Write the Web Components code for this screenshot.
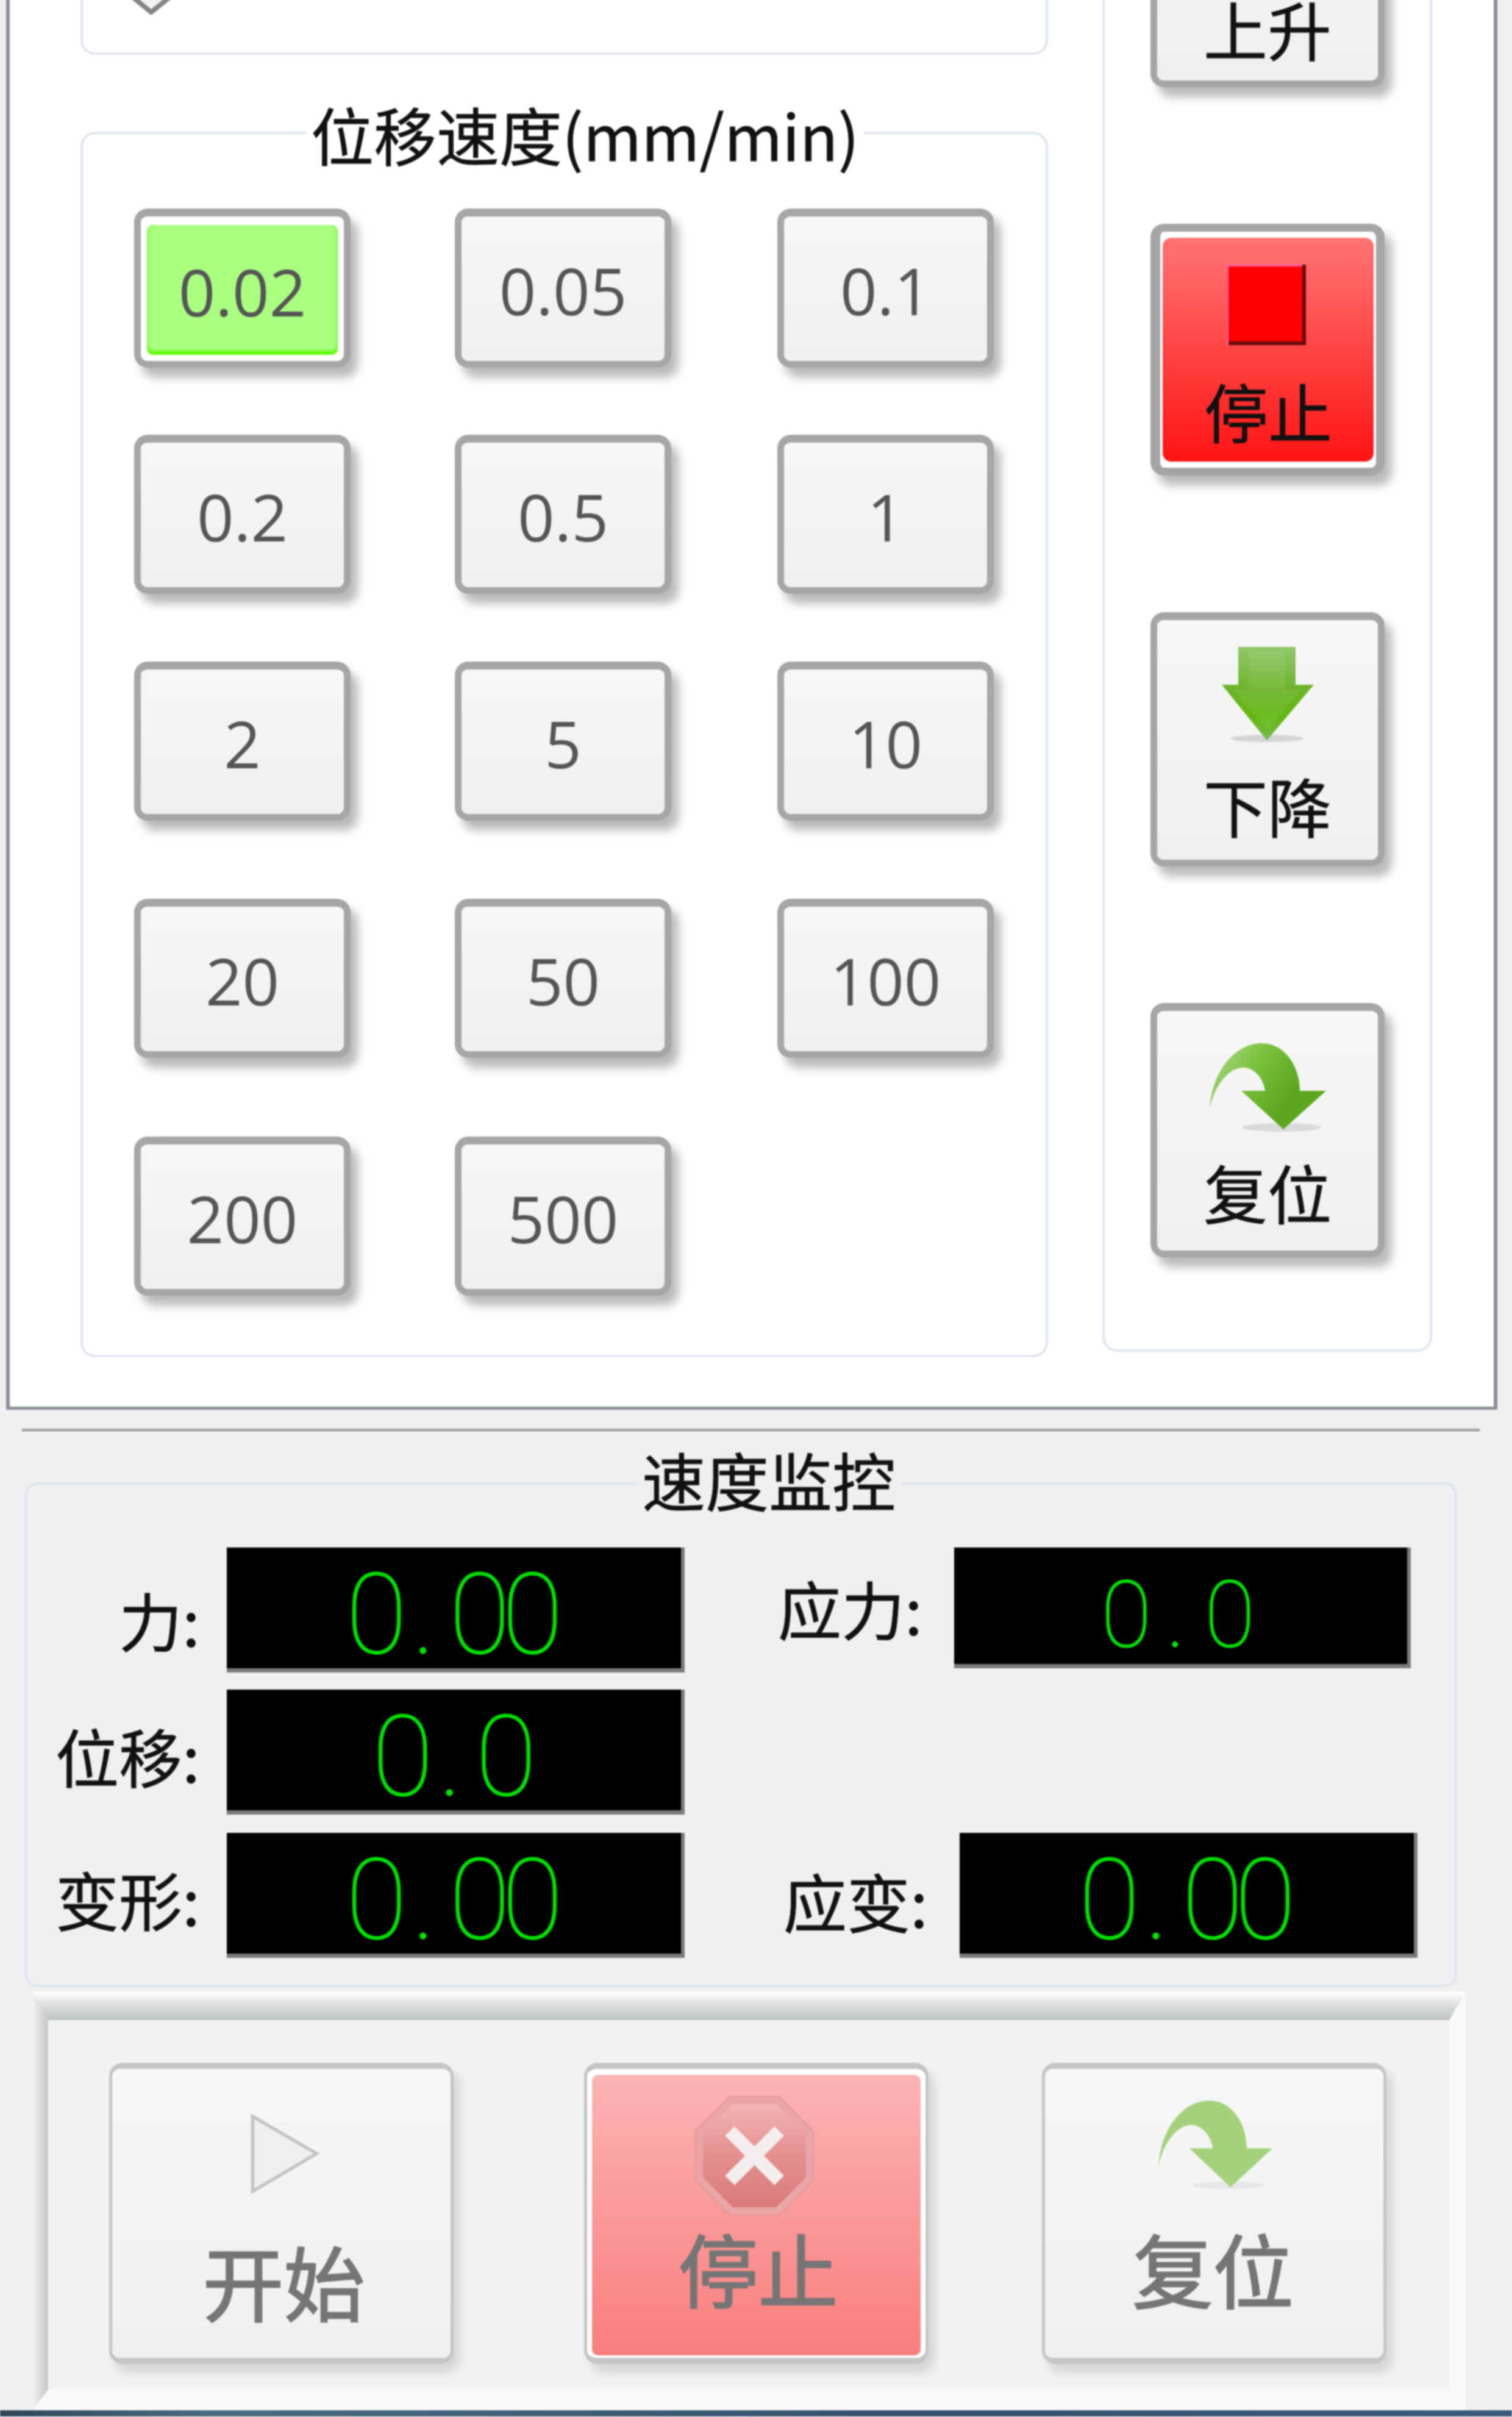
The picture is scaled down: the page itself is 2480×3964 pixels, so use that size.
<!DOCTYPE html>
<html lang="zh">
<head>
<meta charset="utf-8">
<title>位移速度</title>
<style>
  html, body { margin: 0; background: #f0f0f0; }
  body { width: 2480px; height: 3964px; overflow: hidden; font-family: "Noto Sans CJK SC", sans-serif; color: #111; }
  #screen { width: 2480px; height: 3964px; filter: blur(1.1px); }
  .num { font-family: "Open Sans", "Noto Sans CJK SC", sans-serif; }
  .chev { display: block; width: 100px; height: 50px; margin: 270px 0 0 62px; }
</style>
</head>
<body>
<div id="screen">
  <motion-panel>
    <group-box slot="left" style="height:390px"><svg class="chev" viewBox="0 0 96 50"><path d="M4 -20 L4 10 L48 46 L92 10 L92 -20 Z" fill="#f2f2f2" stroke="#858585" stroke-width="8"/></svg></group-box>

    <group-box slot="left" style="height:2010px;margin-top:126px;--title-top:-52px;--title-left:366px;--title-size:103px">
      <span slot="title">位移速度(mm/min)</span>
      <speed-grid>
        <push-button class="num" tone="active">0.02</push-button>
        <push-button class="num">0.05</push-button>
        <push-button class="num">0.1</push-button>
        <push-button class="num">0.2</push-button>
        <push-button class="num">0.5</push-button>
        <push-button class="num">1</push-button>
        <push-button class="num">2</push-button>
        <push-button class="num">5</push-button>
        <push-button class="num">10</push-button>
        <push-button class="num">20</push-button>
        <push-button class="num">50</push-button>
        <push-button class="num">100</push-button>
        <push-button class="num">200</push-button>
        <push-button class="num">500</push-button>
      </speed-grid>
    </group-box>

    <group-box slot="right" style="height:2517px">
      <jog-column>
        <push-button style="--h:417px;--pad:45px;--gap:56px"><svg slot="icon" width="151" height="153" viewBox="0 0 151 153"><path d="M27 153 V91 H0 L74 0 L151 91 H121 V153 Z" fill="#6bb22a"/></svg>上升</push-button>
        <push-button tone="danger" style="--h:413px;--pad:44px;--gap:54px"><svg slot="icon" width="130" height="132" viewBox="0 0 130 132" style="margin-left:-6px"><rect width="130" height="132" fill="#6a0a0a"/><path d="M0 0H124V126H0Z" fill="#f00"/><path d="M0 0H124V3H3V132H0Z" fill="#ff5fa0"/></svg>停止</push-button>
        <push-button style="--h:417px;--pad:44px;--gap:53px"><svg slot="icon" width="151" height="153" viewBox="0 0 151 153"><defs><linearGradient id="dn" x1="0" y1="0" x2="0" y2="1"><stop offset="0" stop-color="#92c86a"/><stop offset=".45" stop-color="#6db42b"/><stop offset=".75" stop-color="#62b80f"/><stop offset="1" stop-color="#78b84a"/></linearGradient></defs><ellipse cx="74" cy="150" rx="60" ry="6" fill="#000" opacity=".12"/><path d="M27 0 H121 V62 H151 L74 153 L0 62 H27 Z" fill="url(#dn)"/><path d="M44 6 H104 V70 H130 L74 136 L20 70 H44 Z" fill="#fff" opacity=".07"/></svg>下降</push-button>
        <push-button style="--h:417px;--pad:53px;--gap:49px"><svg slot="icon" width="191" height="141" viewBox="0 0 191 141"><defs><linearGradient id="rs" x1="0" y1="0" x2="1" y2=".5"><stop offset="0" stop-color="#b4dc96"/><stop offset=".4" stop-color="#7cc23f"/><stop offset=".8" stop-color="#5ca71f"/></linearGradient></defs><ellipse cx="118" cy="138" rx="65" ry="7" fill="#000" opacity=".1"/><path d="M0 107 C5 40 45 0 85 0 C125 0 148 40 148 78 L191 78 L121 141 L52 78 L91 78 C88 55 70 38 52 40 C30 42 8 70 0 107 Z" fill="url(#rs)"/></svg>复位</push-button>
      </jog-column>
    </group-box>
  </motion-panel>

  <rule-line></rule-line>

  <monitor-box>
    <span slot="title">速度监控</span>
    <lcd-field label="力:" value="0.00" style="--shift:15px"></lcd-field>
    <lcd-field label="应力:" value="0.0" style="--lcd-w:749px;--lcd-h:198px;--size:152px;--pitch:78px;--dot:94px;--drop:30px;--nudge:-16px" right></lcd-field>
    <lcd-field label="位移:" value="0.0" style="--shift:5px"></lcd-field>
    <span></span>
    <lcd-field label="变形:" value="0.00" style="--shift:5px"></lcd-field>
    <lcd-field label="应变:" value="0.00" style="--field-x:9px;--shift:8px" right></lcd-field>
  </monitor-box>

  <control-bar>
    <push-button tone="off" style="--w:565px;--h:494px;--pad:75px;--gap:75px;--label:133px;--label-x:8px"><svg slot="icon" width="115" height="130" viewBox="0 0 109 126" style="margin-left:12px"><path d="M3 3 V122 L105 62 Z" fill="#efefef" stroke="#c2c2c2" stroke-width="5"/></svg>开始</push-button>
    <push-button tone="off-danger" style="--w:565px;--h:494px;--pad:34px;--gap:19px;--label:131px;--label-x:6px;margin-left:214px"><svg slot="icon" width="197" height="197" viewBox="0 0 197 197" style="margin-left:-6px"><defs><linearGradient id="hx" x1="0" y1="0" x2="0" y2="1"><stop offset="0" stop-color="#f4b4b4"/><stop offset=".5" stop-color="#e59090"/><stop offset="1" stop-color="#d97a7a"/></linearGradient></defs><path d="M58 2 H139 L195 58 V139 L139 195 H58 L2 139 V58 Z" fill="#eaa6a6" stroke="#e69b9b" stroke-width="3"/><path d="M63 14 H134 L183 63 V134 L134 183 H63 L14 134 V63 Z" fill="url(#hx)"/><path d="M58 58 L139 139 M139 58 L58 139" stroke="#f5eeee" stroke-width="22"/></svg>停止</push-button>
    <push-button tone="off" style="--w:565px;--h:494px;--pad:52px;--gap:66px;--label:132px;--label-x:-4px;margin-left:186px"><svg slot="icon" width="187" height="142" viewBox="0 0 191 141" preserveAspectRatio="none" style="margin-left:4px"><ellipse cx="118" cy="138" rx="60" ry="6" fill="#000" opacity=".05"/><path d="M0 107 C5 40 45 0 85 0 C125 0 148 40 148 78 L191 78 L121 141 L52 78 L91 78 C88 55 70 38 52 40 C30 42 8 70 0 107 Z" fill="#a3d27a"/></svg>复位</push-button>
  </control-bar>

  <task-strip></task-strip>
</div>

<script>
const buttonTemplate = document.createElement('template')
buttonTemplate.innerHTML = `
  <style>
    :host {
      display: block;
      box-sizing: border-box;
      flex: none;
      width: var(--w, 100%);
      height: var(--h, 261px);
      border: solid #a6a6a6;
      border-width: 13px 11px 11px 11px;
      border-radius: 22px;
      box-shadow: 12px 16px 16px rgba(0, 0, 0, .28);
      background: #fff;
      color: #555;
    }
    .face {
      box-sizing: border-box;
      display: flex;
      flex-direction: column;
      align-items: center;
      justify-content: center;
      height: 100%;
      border-radius: 12px;
      background: linear-gradient(#f7f7f7, #f0f0f0);
      font-size: 106px;
      line-height: 1;
    }
    :host(.num) .face { padding-top: 4px; }
    :host(:not(.num)) { color: #111; }
    :host(:not(.num)) .face {
      justify-content: flex-start;
      padding-top: var(--pad, 0);
    }
    ::slotted(svg) { display: block; flex: none; overflow: visible; }
    .label {
      display: block;
      margin: var(--gap, 0) 0 0 var(--label-x, 0);
      font-size: var(--label, 105px);
      line-height: 1;
      -webkit-text-stroke: .8px currentColor;
    }
    :host(.num) .label { margin: 0; font-size: 106px; -webkit-text-stroke: 0; }
    :host([tone="active"]) { padding: 14px 10px 10px; }
    :host([tone="active"]) .face {
      border-radius: 10px;
      background: #aaff80;
      box-shadow: inset 0 -9px 4px -2px #66ff11, inset 6px 0 5px -3px #7dff44, inset -6px 0 5px -3px #7dff44;
    }
    :host([tone="danger"]) { padding: 10px 4px; border-width: 13px 14px 13px 16px; }
    :host([tone="danger"]) .face {
      background: linear-gradient(#ff7474, #ff1414);
      border-radius: 14px;
    }
    :host([tone="off"]), :host([tone="off-danger"]) {
      border-color: #c4c6c6;
      border-width: 10px 5px 10px 5px;
      box-shadow: 10px 14px 16px rgba(0, 0, 0, .12);
      color: #757575;
    }
    :host([tone="off"]) .label, :host([tone="off-danger"]) .label { -webkit-text-stroke: 2.5px currentColor; }
    :host([tone="off-danger"]) { padding: 10px 8px 4px; }
    :host([tone="off-danger"]) .face {
      background: linear-gradient(#fbb4b4, #fa7e7e);
      border-radius: 10px;
    }
  </style>
  <div class="face">
    <slot name="icon"></slot>
    <span class="label"><slot></slot></span>
  </div>
`
/**
 * Raised push button with an optional icon above its label.
 * @class
 * @property {string} - 'tone' - active, danger, off or off-danger.
 */
class PushButton extends HTMLElement {
  constructor () {
    super()
    this.attachShadow({ mode: 'open' })
    this.shadowRoot.appendChild(buttonTemplate.content.cloneNode(true))
  }
}

const groupTemplate = document.createElement('template')
groupTemplate.innerHTML = `
  <style>
    :host {
      display: block;
      box-sizing: border-box;
      border: 4px solid #dfe6ee;
      border-radius: 24px;
      background: #fff;
    }
    .title {
      display: block;
      width: fit-content;
      margin: var(--title-top, 0) 0 0 var(--title-left, 0);
      padding: 0 8px;
      background: inherit;
      font-size: var(--title-size, 100px);
      line-height: 1;
      white-space: nowrap;
      -webkit-text-stroke: .8px currentColor;
    }
    .title:not(.used) { display: none; }
  </style>
  <span class="title"><slot name="title"></slot></span>
  <slot></slot>
`
class GroupBox extends HTMLElement {
  constructor () {
    super()
    this.attachShadow({ mode: 'open' })
    this.shadowRoot.appendChild(groupTemplate.content.cloneNode(true))
    if (this.querySelector('[slot="title"]')) {
      this.shadowRoot.querySelector('.title').classList.add('used')
    }
  }
}

class MotionPanel extends HTMLElement {
  constructor () {
    super()
    this.attachShadow({ mode: 'open' }).innerHTML = `
      <style>
        :host {
          display: grid;
          grid-template-columns: 1587px 541px;
          column-gap: 89px;
          align-items: start;
          box-sizing: border-box;
          width: 2446px;
          height: 2712px;
          margin: -400px 0 0 10px;
          padding: 100px 0 0 116px;
          border: solid #8c8f98;
          border-width: 0 6px 5px 6px;
          background: #fff;
        }
      </style>
      <div><slot name="left"></slot></div>
      <div><slot name="right"></slot></div>
    `
  }
}

class SpeedGrid extends HTMLElement {
  constructor () {
    super()
    this.attachShadow({ mode: 'open' }).innerHTML = `
      <style>
        :host {
          display: grid;
          grid-template-columns: 526px 529px 355px;
          grid-template-rows: 371px 372px 389px 390px 261px;
          margin: 71px 0 0 84px;
        }
        ::slotted(push-button) { width: 355px; }
      </style>
      <slot></slot>
    `
  }
}

class JogColumn extends HTMLElement {
  constructor () {
    super()
    this.attachShadow({ mode: 'open' }).innerHTML = `
      <style>
        :host {
          display: flex;
          flex-direction: column;
          gap: 224px;
          margin: 22px 0 0 75px;
          width: 384px;
        }
      </style>
      <slot></slot>
    `
  }
}

class RuleLine extends HTMLElement {
  constructor () {
    super()
    this.attachShadow({ mode: 'open' }).innerHTML = `
      <style>
        :host {
          display: block;
          width: 2391px;
          height: 5px;
          margin: 31px 0 0 36px;
          background: #a3a6a8;
          border-bottom: 2px solid #fff;
        }
      </style>
    `
  }
}

class MonitorBox extends HTMLElement {
  constructor () {
    super()
    this.attachShadow({ mode: 'open' }).innerHTML = `
      <style>
        :host {
          display: block;
          box-sizing: border-box;
          width: 2349px;
          height: 828px;
          margin: 81px 0 0 41px;
          border: 4px solid #dde5ee;
          border-radius: 20px;
          background: #f0f0f0;
        }
        .title {
          display: block;
          width: fit-content;
          margin: -61px 0 0 1000px;
          padding: 0 8px;
          background: #f0f0f0;
          font-size: 104px;
          line-height: 1;
          -webkit-text-stroke: .8px currentColor;
        }
        .fields {
          display: grid;
          grid-template-columns: 1078px auto;
          grid-template-rows: 233px 235px 205px;
          margin-top: 60px;
        }
      </style>
      <span class="title"><slot name="title"></slot></span>
      <div class="fields"><slot></slot></div>
    `
  }
}

/**
 * Label and black seven-segment style read-out.
 * @class
 * @property {string} - 'label' - caption in front of the read-out.
 * @property {string} - 'value' - number shown, the dot gets its own wide cell.
 */
class LcdField extends HTMLElement {
  connectedCallback () {
    const [whole, part] = this.getAttribute('value').split('.')
    this.attachShadow({ mode: 'open' }).innerHTML = `
      <style>
        :host {
          display: flex;
          align-items: flex-start;
          justify-content: flex-end;
          gap: 44px;
          font-size: 104px;
          line-height: 1;
          color: #111;
        }
        :host([right]) {
          justify-content: flex-start;
          margin-left: var(--field-x, 0);
          padding-left: 156px;
          gap: 64px;
        }
        .label {
          margin-top: calc((var(--lcd-h, 205px) - 104px) / 2 + var(--shift, 0px));
          white-space: nowrap;
          -webkit-text-stroke: .8px currentColor;
        }
        :host([right]) .label { width: 228px; margin-right: -3px; margin-left: -3px; text-align: right; }
        .lcd {
          box-sizing: border-box;
          display: flex;
          align-items: center;
          justify-content: center;
          width: var(--lcd-w, 751px);
          height: var(--lcd-h, 205px);
          background: #000;
          border: solid #7a7a7a;
          border-width: 0 6px 7px 0;
          color: #00e000;
          font-family: Roboto, "Liberation Sans", sans-serif;
          font-weight: 100;
          font-size: var(--size, 183px);
        }
        .digits {
          padding-top: var(--drop, 22px);
          margin-left: var(--nudge, -12px);
          white-space: nowrap;
          letter-spacing: calc(var(--pitch, 89px) - .5615em);
          -webkit-text-stroke: 1.5px #00e000;
        }
        .digits i {
          display: inline-block;
          width: var(--dot, 83px);
          font-style: normal;
          letter-spacing: 0;
          text-align: center;
        }
      </style>
      <span class="label">${this.getAttribute('label')}</span>
      <div class="lcd"><div class="digits">${whole}<i>.</i>${part}</div></div>
    `
  }
}

class ControlBar extends HTMLElement {
  constructor () {
    super()
    this.attachShadow({ mode: 'open' }).innerHTML = `
      <style>
        :host {
          display: flex;
          position: relative;
          box-sizing: border-box;
          width: 2351px;
          height: 687px;
          margin: 7px 0 0 53px;
          padding: 70px 0 0 100px;
          border: solid;
          border-color: #c5c7c7 #fafafa #fafafa #cfcfcf;
          border-width: 47px 27px 34px 26px;
          background: #f2f2f2;
        }
        :host::before {
          content: "";
          position: absolute;
          left: -26px;
          right: -27px;
          top: -47px;
          height: 47px;
          background: linear-gradient(#fbfdfd 10%, #e2e4e4 40%, #bfc2c2);
          clip-path: polygon(0 0, 100% 0, calc(100% - 27px) 100%, 26px 100%);
        }
        :host::after {
          content: "";
          position: absolute;
          left: -26px;
          width: 26px;
          top: -47px;
          bottom: -34px;
          background: linear-gradient(90deg, #f2f2f2, #c6c6c6);
          clip-path: polygon(0 0, 100% 47px, 100% calc(100% - 34px), 0 100%);
        }
      </style>
      <slot></slot>
    `
  }
}

class TaskStrip extends HTMLElement {
  constructor () {
    super()
    this.attachShadow({ mode: 'open' }).innerHTML = `
      <style>
        :host {
          display: block;
          height: 10px;
          background: linear-gradient(90deg, #2f4658, #4a6a80 14%, #35506a 60%, #3c5a78);
        }
      </style>
    `
  }
}

window.customElements.define('push-button', PushButton)
window.customElements.define('group-box', GroupBox)
window.customElements.define('motion-panel', MotionPanel)
window.customElements.define('speed-grid', SpeedGrid)
window.customElements.define('jog-column', JogColumn)
window.customElements.define('rule-line', RuleLine)
window.customElements.define('monitor-box', MonitorBox)
window.customElements.define('lcd-field', LcdField)
window.customElements.define('control-bar', ControlBar)
window.customElements.define('task-strip', TaskStrip)
</script>
</body>
</html>
